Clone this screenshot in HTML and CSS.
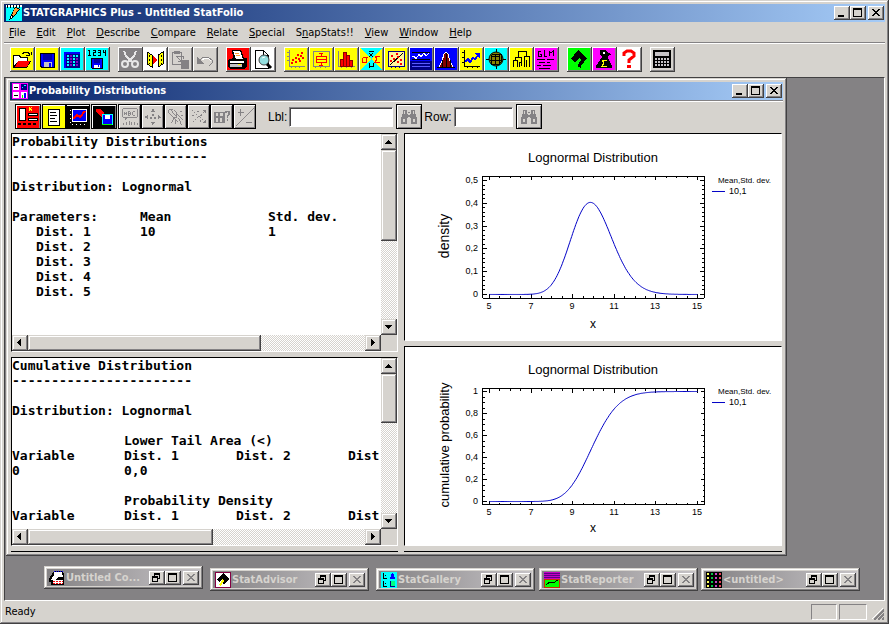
FILE: index.html
```html
<!DOCTYPE html>
<html lang="en">
<head>
    <meta charset="UTF-8">
    <meta name="viewport" content="width=device-width, initial-scale=1.0">
    <title>STATGRAPHICS Plus - Untitled StatFolio</title>
    <link rel="stylesheet" href="styles.css">
</head>
<body>
    <!-- shapes used more than once -->
    <svg class="defs" aria-hidden="true">
        <symbol id="i-min" viewBox="0 0 12 10"><path d="M2 7h6v2H2z"/></symbol>
        <symbol id="i-max" viewBox="0 0 12 10"><path d="M1 0h9v9H1zM2 2v6h7V2z" fill-rule="evenodd"/></symbol>
        <symbol id="i-close" viewBox="0 0 12 10"><path d="M2 1h2v1h1v1h2V2h1V1h2v1H9v1H8v1H7v1h1v1h1v1h1v1H8V7H7V6H5v1H4v1H2V7h1V6h1V5h1V4H4V3H3V2H2z"/></symbol>
        <symbol id="i-restore" viewBox="0 0 12 10"><path d="M3 0h6v6H7V5h1V2H4v1H3zM1 3h6v6H1zM2 5v3h4V5z" fill-rule="evenodd"/></symbol>
        <symbol id="i-up" viewBox="0 0 12 12"><path d="M5 4h1v1h1v1h1v1h1v1H2V7h1V6h1V5h1z"/></symbol>
        <symbol id="i-down" viewBox="0 0 12 12"><path d="M2 4h7v1H8v1H7v1H6v1H5V7H4V6H3V5H2z"/></symbol>
        <symbol id="i-left" viewBox="0 0 12 12"><path d="M7 2v7H6V8H5V7H4V6H3V5h1V4h1V3h1V2z"/></symbol>
        <symbol id="i-right" viewBox="0 0 12 12"><path d="M4 2v7h1V8h1V7h1V6h1V5H7V4H6V3H5V2z"/></symbol>
        <symbol id="i-find" viewBox="0 0 22 22"><path d="M5 4h4v4h1v1h2V8h1V4h4v4h1v3h1v7h-6v-6h-1v-1h-2v1H9v6H3v-7h1V8h1zM6 5v3h1V5zM15 5v3h1V5zM5 13v3h2v-3zM15 13v3h2v-3zM10 6h2v1h-2z" fill="#848284" fill-rule="evenodd"/></symbol>
    </svg>

    <div class="app">
        <header class="titlebar">
            <svg class="icon16" viewBox="0 0 16 16"><path fill="#00ffff" d="M0 2h16v14H0z"/><path fill="#fff" d="M0 0h16v2H0z"/><path d="M1 0h1v3H1zM4 0h1v3H4zM7 0h1v3H7zM10 0h1v3h-1zM13 0h1v3h-1zM3 15l2-5 4-8 5 2-5 7-4 3z"/><path fill="#ff9c31" d="M9 3l4 1-5 7-2-1z"/><path fill="#fff" d="M5 11l2 1-2 1z"/></svg>
            <h1>STATGRAPHICS Plus - Untitled StatFolio</h1>
            <div class="winbtns">
                <button aria-label="Minimize"><svg><use href="#i-min"/></svg></button>
                <button aria-label="Maximize"><svg><use href="#i-max"/></svg></button>
                <button class="close" aria-label="Close"><svg><use href="#i-close"/></svg></button>
            </div>
        </header>

        <nav class="menubar">
            <button><u>F</u>ile</button>
            <button><u>E</u>dit</button>
            <button><u>P</u>lot</button>
            <button><u>D</u>escribe</button>
            <button><u>C</u>ompare</button>
            <button><u>R</u>elate</button>
            <button><u>S</u>pecial</button>
            <button>S<u>n</u>apStats!!</button>
            <button><u>V</u>iew</button>
            <button><u>W</u>indow</button>
            <button><u>H</u>elp</button>
        </nav>

        <div class="toolbar">
            <div class="group">
                <button aria-label="Open"><svg viewBox="0 0 22 22"><path fill="#ffff00" d="M0 0h22v22H0z"/><path d="M2 7h6l2 2h7v4h3l-4 7H2z"/><path fill="#fff" d="M3 8h4l2 2h7v3H7l-4 5z"/><path fill="#ff0000" d="M7 13h12l-3 6H4z"/><path fill="none" stroke="#000" d="M11 5h1V4h5v1h1v3M15 7h4M20 4v3"/></svg></button>
                <button aria-label="Save"><svg viewBox="0 0 22 22"><path fill="#ffff00" d="M0 0h22v22H0z"/><path d="M4 5h15v15H5l-1-1z"/><path fill="#0000ff" d="M5 6h13v13H6l-1-1z"/><path d="M7 6h9v6H7z" fill="#0000a5"/><path fill="#c6c3c6" d="M8 14h8v5H8z"/><path d="M13 15h2v4h-2z" fill="#0000ff"/></svg></button>
                <button aria-label="Open data file"><svg viewBox="0 0 22 22"><path fill="#00ffff" d="M0 0h22v22H0z"/><path fill="#0000ff" d="M3 4h16v16H3z"/><path fill="#000084" d="M5 6h14v14H5z"/><path fill="none" stroke="#00ffff" stroke-width="2" stroke-dasharray="2 1" d="M6 8h12M6 11h12M6 14h12M6 17h12"/><path stroke="#8400c6" stroke-width="2" stroke-dasharray="2 1" d="M10 7v12M16 10v9"/></svg></button>
                <button aria-label="Save data file"><svg viewBox="0 0 22 22"><path fill="#00ffff" d="M0 0h22v22H0z"/><path d="M2 2h2v5h1v1H2V7h1V3H2zM7 2h3v3H8v2h2v1H7V4h2V3H7zM12 2h3v6h-3V7h2V5h-2V4h2V3h-2zM17 2h1v2h1V2h1v6h-1V5h-2z"/><path d="M5 10h12v11H6l-1-1z"/><path fill="#0000ff" d="M6 11h10v9H6z"/><path d="M8 11h6v4H8z" fill="#0000a5"/><path fill="#fff" d="M8 17h6v3H8z"/><path fill="#0000ff" d="M12 17h1v2h-1z"/></svg></button>
            </div>
            <div class="group">
                <button aria-label="Cut"><svg viewBox="0 0 22 22"><path fill="#848284" d="M0 0h22v22H0z"/><path fill="none" stroke="#e7e7e7" stroke-width="2" d="M5 3l2 5 6 6M17 3l-2 5-6 6"/><g class="smooth" fill="none" stroke="#e7e7e7" stroke-width="2"><circle cx="6" cy="16" r="3"/><circle cx="16" cy="16" r="3"/></g></svg></button>
                <button aria-label="Copy"><svg viewBox="0 0 22 22"><path fill="#fff" d="M0 0h22v22H0z"/><path d="M3 4l5 3v12l-5-3zM19 4l-5 3v12l5-3z" fill="#ffff00" stroke="#000"/><path fill="none" stroke="#000" stroke-dasharray="2 2" d="M5 7v9M17 7v9"/><path fill="#ff0000" d="M9 8l4 4-4 4z"/></svg></button>
                <button aria-label="Paste"><svg viewBox="0 0 22 22"><path fill="none" stroke="#848284" d="M3 4h9v12H3zM5 3h5v2H5zM7 8h7v3M8 9l4 4M12 9v4H9"/><path fill="#848284" d="M12 12h8v9h-8z"/></svg></button>
                <button aria-label="Undo"><svg viewBox="0 0 22 22"><path fill="none" stroke="#848284" d="M5 13l4-4h5l4 3v3l-3 3"/><path fill="#848284" d="M3 9v7h7z"/><path fill="none" stroke="#fff" d="M8 12l3-2h3l3 3"/></svg></button>
            </div>
            <div class="group">
                <button aria-label="Print"><svg viewBox="0 0 22 22"><path fill="#ff0000" d="M0 0h22v22H0z"/><path d="M5 2h9l3 8h3v8l-3 3H3l-2-2v-7l5-2z"/><path fill="#fff" d="M6 3h7l3 8H9zM3 13h14v2H3z"/><path stroke="#ff9c31" d="M8 5h4M9 7h4"/><path fill="#c6c3c6" d="M3 16h12v3H3z"/><path fill="#ffff00" d="M11 16h3v1h-3z"/></svg></button>
                <button aria-label="Print preview"><svg viewBox="0 0 22 22"><path fill="#fff" d="M0 0h22v22H0z"/><path fill="#fff" stroke="#000" d="M3 2h8l5 5v13H3zM11 2v5h5"/><g class="smooth"><circle cx="12" cy="12" r="5" fill="#94dfdf" stroke="#424142"/><path stroke="#000" stroke-width="3" d="M15 16l4 4"/><path stroke="#fff" d="M10 10l3-1"/></g></svg></button>
            </div>
            <div class="group">
                <button aria-label="Scatterplot"><svg viewBox="0 0 22 22"><path fill="#ffff00" d="M0 0h22v22H0z"/><path fill="none" stroke="#848284" d="M4 2v16h16M2 4h2M2 8h2M2 12h2M6 18v2M10 18v2M14 18v2"/><path fill="#ff0000" d="M6 14h2v2H6zM7 11h2v2H7zM10 13h2v2h-2zM10 9h2v2h-2zM13 10h2v2h-2zM12 6h2v2h-2zM15 7h2v2h-2zM16 4h2v2h-2zM14 12h2v2h-2zM17 9h2v2h-2z"/></svg></button>
                <button aria-label="Box-and-whisker plot"><svg viewBox="0 0 22 22"><path fill="#ffff00" d="M0 0h22v22H0z"/><path fill="none" stroke="#848284" d="M3 3h16v15H3zM5 18v2M10 18v2M15 18v2"/><path fill="none" stroke="#ff0000" d="M6 8h10v6H6zM6 11h10M11 5v3M11 14v3M9 5h4M9 17h4"/></svg></button>
                <button aria-label="Histogram"><svg viewBox="0 0 22 22"><path fill="#ffff00" d="M0 0h22v22H0z"/><path fill="none" stroke="#848284" d="M3 3v15h17M6 18v2M11 18v2M16 18v2"/><path fill="#ff0000" stroke="#840000" d="M5 11h3v7H5zM8 4h3v14H8zM11 7h3v11h-3zM14 12h3v6h-3z"/></svg></button>
                <button aria-label="Summary statistics"><svg viewBox="0 0 22 22"><path fill="#00ffff" d="M0 0h22v22H0z"/><path fill="#ffff00" d="M0 0l22 22V0L0 22z"/><path fill="none" stroke="#000" d="M9 3h5M9 5l4 4M13 5L9 9M9 15v5M9 18h4M13 15v4"/><path fill="none" stroke="#ff0000" d="M8 9H4L2 11v3h4v-4M20 8h-5l2 3-2 3h5"/></svg></button>
                <button aria-label="Simple regression"><svg viewBox="0 0 22 22"><path fill="#ffff00" d="M0 0h22v22H0z"/><path fill="#fff79c" stroke="#000084" d="M3 3h16v15H3z"/><path stroke="#000" d="M5 17L18 5"/><path fill="#ff0000" d="M6 7h2v2H6zM8 10h2v2H8zM11 5h2v2h-2zM12 8h2v2h-2zM5 12h2v2H5zM12 13h2v2h-2zM15 11h2v2h-2zM15 15h2v2h-2z"/><path stroke="#000084" d="M6 18v2M10 18v2M14 18v2"/></svg></button>
                <button aria-label="Control charts"><svg viewBox="0 0 22 22"><path fill="#0000ff" d="M0 0h22v22H0z"/><path fill="#000084" d="M0 13h22v9H0z"/><path stroke="#000" d="M2 4h18M2 11h18"/><path stroke="#5a5aff" d="M2 15h18M2 18h18"/><path fill="none" stroke="#fff" d="M2 9l2-1 2 3 3-5 2 3 3-4 2 3 3-3"/></svg></button>
                <button aria-label="Capability analysis"><svg viewBox="0 0 22 22"><path fill="#0000ff" d="M0 0h22v22H0z"/><path fill="#840000" stroke="#fff" d="M4 19l3-6 2-7 2-2 2 2 2 7 3 6z"/><path fill="none" stroke="#000" d="M2 19h18M11 5v14M7 12v7M15 12v7"/></svg></button>
                <button aria-label="Time series"><svg viewBox="0 0 22 22"><path fill="#ffff00" d="M0 0h22v22H0z"/><path fill="none" stroke="#000" d="M4 2v16h16M2 4h2M2 9h2M2 14h2M7 18v2M12 18v2M17 18v2"/><path fill="none" stroke="#0000ff" stroke-width="2" d="M5 14l3-3 2 3 3-4 2 1 4-5"/><path fill="#0000ff" d="M14 5h6v6z"/></svg></button>
                <button aria-label="Experimental design"><svg viewBox="0 0 22 22"><path fill="#00ffff" d="M0 0h22v22H0z"/><path d="M11 1v20M1 11h20" stroke="#000"/><g class="smooth"><circle cx="11" cy="11" r="7" fill="#848200" stroke="#000"/></g><path fill="none" stroke="#000" d="M6 8h8v8H6zM8 6h8v8M6 8l2-2M14 8l2-2M14 16l2-2M10 6v11M5 12h12"/></svg></button>
                <button aria-label="Cluster analysis"><svg viewBox="0 0 22 22"><path fill="#ffff00" d="M0 0h22v22H0z"/><path fill="none" stroke="#000" d="M8 9V3h8v5M5 12V9h6v9M3 19v-7h4v7M14 19V8h5v11M16 12v7M9 19v-5h2"/></svg></button>
                <button aria-label="General linear models"><svg viewBox="0 0 22 22"><path fill="#ff00ff" d="M0 0h22v22H0z"/><path fill="none" stroke="#000" d="M6 3H3v5h3V6H5M9 2v6h3M14 8V3l2 2 2-2v5M2 11h8M12 11h7M4 14h6M12 14h3M2 17h4M8 17h8M4 20h11"/></svg></button>
            </div>
            <div class="group">
                <button aria-label="StatAdvisor"><svg viewBox="0 0 22 22"><path fill="#00ff00" d="M0 0h22v22H0z"/><path d="M10 2l9 8-6 8v2l-4-2 4-6-2-2-4 5-4-4z"/><path fill="#00ff00" d="M8 15l2-1v4l-2-1z"/></svg></button>
                <button aria-label="StatWizard"><svg viewBox="0 0 22 22"><path fill="#ff00ff" d="M0 0h22v22H0z"/><path d="M7 2h5l3 3 4 1-4 2v2l4 8v2H3v-2l4-6 2-3-2-3z"/><path fill="#fff" d="M10 4h2v2h-2z"/><path fill="none" stroke="#ffff00" d="M14 12H9l2 3-2 3h5"/></svg></button>
                <button aria-label="Help"><svg viewBox="0 0 22 22"><path fill="#fff" d="M0 0h22v22H0z"/><path class="smooth" fill="none" stroke="#ff0000" stroke-width="3" d="M6 8V5l3-2h4l3 2v3l-5 4v3"/><path fill="#ff0000" d="M9 17h4v3H9z"/></svg></button>
            </div>
            <div class="group">
                <button aria-label="Calculator"><svg viewBox="0 0 22 22"><path d="M2 2h18v18H2z"/><path fill="#c6c3c6" d="M4 4h14v4H4z"/><path stroke="#c6c3c6" stroke-width="2" stroke-dasharray="2 1" d="M4 11h14M4 14h14M4 17h14"/></svg></button>
            </div>
        </div>

        <main class="workspace">
            <section class="child">
                <header class="titlebar">
                    <svg class="icon16" viewBox="0 0 16 16"><path fill="#ff00ff" d="M0 0h16v16H0z"/><path fill="#fff" d="M1 1h6v6H1zM1 9h6v6H1z"/><path fill="#000084" d="M9 1h6v6H9z"/><path fill="#fff" d="M9 9h6v6H9z"/><path d="M2 4h4v1H2zM2 12h4v1H2z"/><path fill="#00ff00" d="M10 12h1v3h-1z"/><path fill="#0000ff" d="M12 10h2v5h-2z"/><path fill="#00ffff" d="M10 4h1v1h-1zM12 2h2v1h-2z"/></svg>
                    <h2>Probability Distributions</h2>
                    <div class="winbtns">
                        <button aria-label="Minimize"><svg><use href="#i-min"/></svg></button>
                        <button aria-label="Maximize"><svg><use href="#i-max"/></svg></button>
                        <button class="close" aria-label="Close"><svg><use href="#i-close"/></svg></button>
                    </div>
                </header>

                <div class="childbar">
                    <div class="group">
                        <button aria-label="Input dialog"><svg viewBox="0 0 22 22"><path fill="#ff0000" d="M0 0h22v22H0z"/><path fill="#fff" stroke="#000" d="M2 2h6v12H2zM11 7h9v2h-9zM11 12h9v2h-9z"/><path fill="none" stroke="#ffff00" d="M12 1l3 4M15 1l-3 4"/><path fill="none" stroke="#000" stroke-width="2" stroke-dasharray="3 2" d="M1 18h20"/></svg></button>
                    </div>
                    <div class="group">
                        <button aria-label="Tabular options"><svg viewBox="0 0 22 22"><path fill="#ffff00" d="M0 0h22v22H0z"/><path fill="#fff" stroke="#000" d="M5 3h11v16H5z"/><path stroke="#000" d="M7 6h6M7 9h7M7 12h5M7 15h7"/></svg></button>
                        <button aria-label="Graphical options"><svg viewBox="0 0 22 22"><path d="M0 0h22v22H0z"/><path fill="#0000ff" stroke="#fff" d="M5 3h14v12H5z"/><path fill="none" stroke="#ff0000" stroke-width="2" d="M6 13l4-4 3 2 5-6"/><path stroke="#fff" stroke-dasharray="1 3" d="M3 4v14M5 18h15"/></svg></button>
                    </div>
                    <div class="group">
                        <button aria-label="Save results"><svg viewBox="0 0 22 22"><path d="M0 0h22v22H0z"/><path fill="#ff0000" d="M3 3h4l4 4v4H8L3 6z"/><path fill="#0000ff" stroke="#00ffff" d="M9 8h10v10H9z"/><path fill="#fff" d="M12 9h5v4h-5z"/><path fill="none" stroke="#00ff00" d="M9 18h10"/></svg></button>
                    </div>
                    <div class="group tight">
                        <button aria-label="Graph labels"><svg viewBox="0 0 22 22"><g fill="none" stroke="#848284"><path d="M3 2h16v9H8l-2 3v-3H3zM5 9V6l1-1 1 1v3M5 7h2M9 5v4h2V5zM9 7h3M17 5h-3v4h3M4 20v-2M7 20v-3M10 20v-5M13 20v-3M16 20v-4M19 20v-2"/></g></svg></button>
                        <button aria-label="Jitter"><svg viewBox="0 0 22 22"><g fill="#848284"><path d="M11 2l3 4H8zM11 20l3-4H8zM2 11l4-3v6zM20 11l-4-3v6zM10 8h2v2h-2zM8 11h2v2H8zM12 11h2v2h-2zM5 5h1v1H5zM16 5h1v1h-1zM5 16h1v1H5zM16 16h1v1h-1z"/></g></svg></button>
                        <button aria-label="Brush"><svg viewBox="0 0 22 22"><path fill="none" stroke="#848284" d="M3 3h5l4 4v4H8L3 6zM5 3l6 7M8 11l5 5M12 8l6 6M9 12l-3 6M11 14l-1 5M14 12l3 8M15 4l3 2M19 9l-3 1"/></svg></button>
                        <button aria-label="Rotate"><svg viewBox="0 0 22 22"><path fill="none" stroke="#848284" stroke-dasharray="2 1" d="M3 3l16 15M19 3L3 18"/><path fill="#848284" d="M14 3h5v4zM15 18h4v-4zM3 9h2v1H3zM9 4h2v1H9zM12 9h2v1h-2zM7 16h2v1H7zM12 14h1v2h-1z"/></svg></button>
                        <button aria-label="Identify"><svg viewBox="0 0 22 22"><path fill="#848284" d="M2 5h12v13H2zM4 7v3h3V7zM9 7v3h3V7zM4 12v4h3v-4zM9 12v4h2v-4z" fill-rule="evenodd"/><path fill="none" stroke="#848284" stroke-width="2" d="M15 7V5h4v3l-2 2v2M17 13v2"/></svg></button>
                        <button aria-label="Include or exclude"><svg viewBox="0 0 22 22"><path fill="none" stroke="#848284" d="M1 21L21 1"/><path fill="none" stroke="#848284" stroke-width="2" d="M3 6h7M6 2v8M12 17h7"/></svg></button>
                    </div>
                    <label for="lbl">Lbl:</label>
                    <input id="lbl" class="field" type="text">
                    <button class="find" aria-label="Find label"><svg><use href="#i-find"/></svg></button>
                    <label class="row-label" for="row">Row:</label>
                    <input id="row" class="field short" type="text">
                    <button class="find" aria-label="Find row"><svg><use href="#i-find"/></svg></button>
                </div>

                <div class="panes">
                    <div class="col">
                        <div class="pane text-pane upper">
                            <div class="report">
                                <h3>Probability Distributions</h3>
                                <p>-------------------------</p>
                                <p class="gap">Distribution: Lognormal</p>
                                <table class="params gap">
                                    <tr><th>Parameters:</th><th>Mean</th><th>Std. dev.</th></tr>
                                    <tr><td class="indent">Dist. 1</td><td>10</td><td>1</td></tr>
                                    <tr><td class="indent">Dist. 2</td><td></td><td></td></tr>
                                    <tr><td class="indent">Dist. 3</td><td></td><td></td></tr>
                                    <tr><td class="indent">Dist. 4</td><td></td><td></td></tr>
                                    <tr><td class="indent">Dist. 5</td><td></td><td></td></tr>
                                </table>
                            </div>
                            <div class="vscroll">
                                <button aria-label="Scroll up"><svg><use href="#i-up"/></svg></button>
                                <div class="track"><div class="thumb"></div></div>
                                <button aria-label="Scroll down"><svg><use href="#i-down"/></svg></button>
                            </div>
                            <div class="hscroll">
                                <button aria-label="Scroll left"><svg><use href="#i-left"/></svg></button>
                                <div class="track"><div class="thumb"></div></div>
                                <button aria-label="Scroll right"><svg><use href="#i-right"/></svg></button>
                            </div>
                        </div>
                        <div class="pane text-pane lower">
                            <div class="report">
                                <h3>Cumulative Distribution</h3>
                                <p>-----------------------</p>
                                <p class="gap">Distribution: Lognormal</p>
                                <table class="tails gap">
                                    <tr><th></th><th colspan="3">Lower Tail Area (&lt;)</th></tr>
                                    <tr><th>Variable</th><th>Dist. 1</th><th>Dist. 2</th><th>Dist</th></tr>
                                    <tr><td>0</td><td>0,0</td><td></td><td></td></tr>
                                </table>
                                <table class="tails gap">
                                    <tr><th></th><th colspan="3">Probability Density</th></tr>
                                    <tr><th>Variable</th><th>Dist. 1</th><th>Dist. 2</th><th>Dist</th></tr>
                                </table>
                            </div>
                            <div class="vscroll">
                                <button aria-label="Scroll up"><svg><use href="#i-up"/></svg></button>
                                <div class="track"><div class="thumb"></div></div>
                                <button aria-label="Scroll down"><svg><use href="#i-down"/></svg></button>
                            </div>
                            <div class="hscroll">
                                <button aria-label="Scroll left"><svg><use href="#i-left"/></svg></button>
                                <div class="track"><div class="thumb"></div></div>
                                <button aria-label="Scroll right"><svg><use href="#i-right"/></svg></button>
                            </div>
                        </div>
                    </div>
                    <div class="col">
                        <div class="pane chart-pane pdf">
                            <svg class="chart" id="pdf" viewBox="0 0 376 206" role="img" aria-label="Lognormal density"></svg>
                        </div>
                        <div class="pane chart-pane cdf">
                            <svg class="chart" id="cdf" viewBox="0 0 376 198" role="img" aria-label="Lognormal cumulative probability"></svg>
                        </div>
                    </div>
                </div>
            </section>

            <section class="minwin comments">
                <header class="titlebar">
                    <svg class="icon16" viewBox="0 0 16 16"><path fill="#000" d="M5 1h9l1 4v10H2v-3H0V9l3-5z"/><path fill="#fff" d="M5 2h8l1 5H9l-2 3H2l3-5z"/><path fill="#fff" d="M4 10h10v4H4z"/><path stroke="#ff0000" stroke-dasharray="2 1" d="M4 11h10M4 13h10"/><path stroke="#0000ff" stroke-dasharray="1 1" d="M5 1h9"/></svg>
                    <h2>Untitled Co...</h2>
                    <div class="winbtns">
                        <button aria-label="Restore"><svg><use href="#i-restore"/></svg></button>
                        <button aria-label="Maximize"><svg><use href="#i-max"/></svg></button>
                        <button class="close" aria-label="Close" disabled><svg><use href="#i-close"/></svg></button>
                    </div>
                </header>
            </section>
            <section class="minwin advisor">
                <header class="titlebar">
                    <svg class="icon16" viewBox="0 0 16 16"><path fill="#fff" stroke="#840042" d="M0 0h15v15H0z"/><path d="M8 1l6 6-5 6-1-1 1-3-2-2-3 3-2-2z"/><path fill="#ffff00" d="M7 7l2 2-3 5-3-1 3-2z"/></svg>
                    <h2>StatAdvisor</h2>
                    <div class="winbtns">
                        <button aria-label="Restore"><svg><use href="#i-restore"/></svg></button>
                        <button aria-label="Maximize"><svg><use href="#i-max"/></svg></button>
                        <button class="close" aria-label="Close" disabled><svg><use href="#i-close"/></svg></button>
                    </div>
                </header>
            </section>
            <section class="minwin gallery">
                <header class="titlebar">
                    <svg class="icon16" viewBox="0 0 16 16"><path fill="#00ffff" d="M0 0h16v16H0z"/><path fill="none" stroke="#000" d="M2 1v5h4M4 3h1M2 9v5h4M4 11h1"/><path fill="#0000ff" d="M9 6l2-5 2 2 1 4H9z"/><path fill="#00ff84" d="M9 9h5v5H9z"/><path fill="none" stroke="#000084" d="M9 9v5h5"/></svg>
                    <h2>StatGallery</h2>
                    <div class="winbtns">
                        <button aria-label="Restore"><svg><use href="#i-restore"/></svg></button>
                        <button aria-label="Maximize"><svg><use href="#i-max"/></svg></button>
                        <button class="close" aria-label="Close" disabled><svg><use href="#i-close"/></svg></button>
                    </div>
                </header>
            </section>
            <section class="minwin reporter">
                <header class="titlebar">
                    <svg class="icon16" viewBox="0 0 16 16"><path fill="#c600c6" d="M0 0h16v7H0z"/><path stroke="#5a0084" d="M0 1h16M0 3h16M0 5h16"/><path fill="#00ff00" stroke="#c63100" d="M0 7h15v8H0z"/><path fill="none" stroke="#000" d="M2 13l4-3 3 1 5-3"/></svg>
                    <h2>StatReporter</h2>
                    <div class="winbtns">
                        <button aria-label="Restore"><svg><use href="#i-restore"/></svg></button>
                        <button aria-label="Maximize"><svg><use href="#i-max"/></svg></button>
                        <button class="close" aria-label="Close" disabled><svg><use href="#i-close"/></svg></button>
                    </div>
                </header>
            </section>
            <section class="minwin datasheet">
                <header class="titlebar">
                    <svg class="icon16" viewBox="0 0 16 16"><path d="M0 0h16v16H0z"/><g stroke-width="2" stroke-dasharray="2 2"><path stroke="#ffff5a" d="M2 1v14"/><path stroke="#00c642" d="M6 1v14"/><path stroke="#c642c6" d="M10 1v14"/><path stroke="#e7425a" d="M14 1v14"/></g></svg>
                    <h2>&lt;untitled&gt;</h2>
                    <div class="winbtns">
                        <button aria-label="Restore"><svg><use href="#i-restore"/></svg></button>
                        <button aria-label="Maximize"><svg><use href="#i-max"/></svg></button>
                        <button class="close" aria-label="Close" disabled><svg><use href="#i-close"/></svg></button>
                    </div>
                </header>
            </section>
        </main>

        <footer class="statusbar">
            <span class="message">Ready</span>
            <span class="cell"></span>
            <span class="cell wide"></span>
            <svg class="grip" viewBox="0 0 12 12"><path stroke="#fff" d="M0 11L11 0M4 11l7-7M8 11l3-3"/><path stroke="#848284" stroke-width="2" d="M2 12L12 2M6 12l6-6M10 12l2-2"/></svg>
        </footer>
    </div>

    <script src="charts.js"></script>
</body>
</html>
```
FILE: styles.css
```css
* {
    box-sizing: border-box;
}
body {
    margin: 0;
    background: #d6d3ce;
    color: #000;
    font-family: "DejaVu Sans Condensed", "DejaVu Sans", sans-serif;
    font-size: 11px;
}
h1, h2, h3, p {
    margin: 0;
    font-size: inherit;
}
button {
    padding: 0;
    border: 0;
    background: #d6d3ce;
    color: inherit;
    font: inherit;
}
svg {
    display: block;
    shape-rendering: crispEdges;
}
.smooth {
    shape-rendering: auto;
}
.defs {
    position: absolute;
    width: 0;
    height: 0;
}
.app {
    display: flex;
    flex-direction: column;
    height: 100vh;
    min-height: 480px;
    padding: 4px 4px 2px;
    box-shadow: inset -1px -1px #424142, inset 1px 1px #d6d3ce, inset -2px -2px #848284, inset 2px 2px #fff;
}

/* title bars */
.titlebar {
    display: flex;
    align-items: center;
    flex: none;
    height: 18px;
    padding: 0 1px 0 2px;
    background: linear-gradient(90deg, #08246b, #a5cbf7);
    color: #fff;
}
.titlebar h1, .titlebar h2 {
    flex: 1;
    min-width: 0;
    margin-left: 1px;
    overflow: hidden;
    font-weight: bold;
    line-height: 16px;
    white-space: nowrap;
}
.icon16 {
    flex: none;
    width: 16px;
    height: 16px;
}
.winbtns {
    display: flex;
    flex: none;
}
.winbtns button {
    width: 16px;
    height: 14px;
    padding: 1px 2px 3px;
    color: #000;
    box-shadow: inset -1px -1px #424142, inset 1px 1px #fff, inset -2px -2px #848284;
}
.winbtns .close {
    margin-left: 2px;
}
.winbtns svg {
    width: 12px;
    height: 10px;
    margin-top: 1px;
}
.winbtns button:disabled svg {
    fill: #848284;
}

.menubar {
    display: flex;
    flex: none;
    height: 21px;
    border-bottom: 1px solid #848284;
    box-shadow: 0 1px #fff;
}
.menubar button {
    padding: 0 6px 0 5px;
}

.toolbar {
    display: flex;
    flex: none;
    gap: 8px;
    padding: 4px 6px 5px;
}
.group {
    display: flex;
}
.toolbar button {
    width: 25px;
    height: 25px;
    padding: 1px 2px 2px 1px;
    box-shadow: inset -1px -1px #424142, inset 1px 1px #fff, inset -2px -2px #848284;
}
.toolbar svg {
    width: 22px;
    height: 22px;
}

/* MDI desktop */
.workspace {
    position: relative;
    display: flex;
    flex: 1;
    min-height: 0;
    padding: 0 97px 44px 1px;
    background: #848284;
    border: 1px solid #424142;
    border-right-color: #fff;
    border-bottom-color: #fff;
}
.child {
    display: flex;
    flex: 1;
    flex-direction: column;
    min-width: 0;
    padding: 4px;
    background: #d6d3ce;
    box-shadow: inset -1px -1px #424142, inset 1px 1px #d6d3ce, inset -2px -2px #848284, inset 2px 2px #fff;
}
.childbar {
    display: flex;
    flex: none;
    align-items: center;
    height: 33px;
    padding: 0 5px 1px;
    border-top: 1px solid #848284;
    box-shadow: inset 0 1px #fff;
}
.childbar .group {
    margin-right: 1px;
}
.childbar button {
    width: 24px;
    height: 25px;
    border: 1px solid #000;
    box-shadow: inset 1px 1px #fff, inset -1px -1px #848284;
}
.childbar button svg {
    width: 100%;
    height: 22px;
}
.childbar .group:first-child button,
.childbar .group:nth-child(3) button,
.childbar .find {
    width: 26px;
}
.childbar .tight button {
    width: 23px;
    padding: 1px 0 0 1px;
}
.childbar label {
    margin: 0 2px 0 11px;
    font-size: 12px;
    font-family: "Liberation Sans", sans-serif;
}
.childbar .row-label {
    margin-left: 2px;
}
.field {
    width: 104px;
    height: 20px;
    margin-right: 3px;
    border: 1px solid #848284;
    border-right-color: #fff;
    border-bottom-color: #fff;
    box-shadow: inset 1px 1px #424142;
    background: #fff;
    font: inherit;
}
.field.short {
    width: 59px;
}

.panes {
    display: grid;
    flex: 1;
    grid-template-columns: minmax(0, 387fr) minmax(0, 378fr);
    gap: 6px;
    min-height: 0;
    padding: 0 1px 0 1px;
}
.col {
    display: flex;
    flex-direction: column;
    gap: 5px;
    min-height: 0;
    border-bottom: 1px solid #000;
    padding-bottom: 5px;
}
.pane {
    min-height: 0;
    overflow: hidden;
    background: #fff;
    border: 1px solid #000;
    border-right-color: #fff;
    border-bottom-color: #fff;
}
.upper {
    flex: 219 1 0;
}
.lower {
    flex: 189 1 0;
}
.pdf {
    flex: 208 1 0;
}
.cdf {
    flex: 200 1 0;
}

/* text reports */
.text-pane {
    display: grid;
    grid-template-columns: minmax(0, 1fr) 16px;
    grid-template-rows: minmax(0, 1fr) 16px;
    background: #d6d3ce;
}
.report {
    overflow: hidden;
    background: #fff;
    font: bold 13px/15px "DejaVu Sans Mono", monospace;
    white-space: nowrap;
}
.report .gap {
    margin-top: 15px;
}
.report table {
    border-collapse: collapse;
    table-layout: fixed;
    width: 448px;
}
.report .params {
    width: 384px;
}
.report th, .report td {
    padding: 0;
    text-align: left;
    height: 15px;
}
.report .indent {
    padding-left: 24px;
}

.vscroll, .hscroll {
    display: flex;
}
.vscroll {
    flex-direction: column;
}
.vscroll button, .hscroll button, .thumb {
    background: #d6d3ce;
    box-shadow: inset -1px -1px #424142, inset 1px 1px #d6d3ce, inset -2px -2px #848284, inset 2px 2px #fff;
}
.vscroll button, .hscroll button {
    flex: none;
    width: 16px;
    height: 16px;
    padding: 2px;
}
.vscroll svg, .hscroll svg {
    width: 12px;
    height: 12px;
}
.track {
    flex: 1;
    background: repeating-conic-gradient(#fff 0 25%, #d6d3ce 0 50%) 0 0 / 2px 2px;
}
.thumb {
    height: 100%;
}
.upper .vscroll .thumb {
    height: 54%;
}
.lower .vscroll .thumb {
    height: 35%;
}
.upper .hscroll .thumb {
    width: 69%;
}
.lower .hscroll .thumb {
    width: 55%;
}

/* graphs */
.chart {
    width: 100%;
    height: 100%;
    font-family: "Liberation Sans", Arial, sans-serif;
}
.chart .title {
    font-size: 13px;
    text-anchor: middle;
}
.chart .xlabel {
    font-size: 12px;
    text-anchor: middle;
}
.chart .ylabel {
    font-size: 14px;
    text-anchor: middle;
}
#cdf .ylabel {
    font-size: 13px;
}
.chart .tick, .chart .legend {
    font-size: 9px;
}
.chart .legend-head {
    font-size: 8px;
}
.chart .xt {
    text-anchor: middle;
}
.chart .yt {
    text-anchor: end;
}
.chart .axis {
    fill: none;
    stroke: #000;
}
.chart .curve {
    fill: none;
    stroke: #0000c6;
    shape-rendering: auto;
}

/* minimized windows */
.minwin {
    position: absolute;
    bottom: 9px;
    width: 159px;
    height: 23px;
    padding: 3px;
    background: #d6d3ce;
    box-shadow: inset -1px -1px #424142, inset 1px 1px #d6d3ce, inset -2px -2px #848284, inset 2px 2px #fff;
}
.minwin .titlebar {
    height: 17px;
    background: linear-gradient(90deg, #848284, #c6c3c6);
    color: #d6d3ce;
}
.comments {
    bottom: 11px;
    left: 39px;
}
.advisor {
    left: 205px;
}
.gallery {
    left: 371px;
}
.reporter {
    left: 534px;
}
.datasheet {
    left: 696px;
}

.statusbar {
    display: flex;
    flex: none;
    align-items: center;
    gap: 2px;
    height: 21px;
}
.message {
    flex: 1;
    padding-left: 1px;
}
.cell {
    width: 26px;
    height: 16px;
    border: 1px solid #848284;
    border-right-color: #fff;
    border-bottom-color: #fff;
}
.cell.wide {
    width: 28px;
}
.grip {
    width: 12px;
    height: 12px;
    margin: 5px 1px 0 3px;
}
```
FILE: charts.js
```js
const NS = 'http://www.w3.org/2000/svg';

// lognormal with mean 10 and standard deviation 1
const sigma = Math.sqrt(Math.log(1.01));
const mu = Math.log(10) - sigma * sigma / 2;

function density(x) {
    const z = (Math.log(x) - mu) / sigma;
    return Math.exp(-z * z / 2) / (x * sigma * Math.sqrt(2 * Math.PI));
}

function add(svg, name, attrs, text) {
    const el = document.createElementNS(NS, name);
    for (const key in attrs) el.setAttribute(key, attrs[key]);
    if (text) el.textContent = text;
    svg.appendChild(el);
}

function drawChart(id, c) {
    const svg = document.getElementById(id);
    const left = 77, right = 299;
    const px = x => 84 + (x - 5) * 208 / 10;
    const py = y => c.y0 - y / c.max * (c.y0 - c.y1);
    let axis = `M${left} ${c.top}H${right}V${c.bottom}H${left}Z`;

    for (let i = 0; i <= 20; i++) {
        const x = Math.round(px(5 + i / 2));
        const len = i % 4 ? 2 : 4;
        axis += `M${x} ${c.top}v${len}M${x} ${c.bottom}v-${len}`;
        if (i % 4 === 0) {
            add(svg, 'text', { class: 'tick xt', x: x, y: c.bottom + 11 }, String(5 + i / 2));
        }
    }
    const steps = 5 * c.minor;
    for (let i = 0; i <= steps; i++) {
        const value = c.max * i / steps;
        const y = Math.round(py(value));
        const len = i % c.minor ? 2 : 4;
        axis += `M${left} ${y}h${len}M${right} ${y}h-${len}`;
        if (i % c.minor === 0) {
            const label = String(Number(value.toFixed(1))).replace('.', ',');
            add(svg, 'text', { class: 'tick yt', x: left - 4, y: y + 3 }, label);
        }
    }
    add(svg, 'path', { class: 'axis', transform: 'translate(.5 .5)', d: axis });

    // the cumulative curve is the running sum of the density
    let d = '';
    let sum = 0;
    for (let x = 5; x <= 15.001; x += 0.05) {
        sum += density(x - 0.025) * 0.05;
        const y = c.cumulative ? sum : density(x);
        d += (d ? 'L' : 'M') + px(x).toFixed(1) + ' ' + py(y).toFixed(1);
    }
    add(svg, 'path', { class: 'curve', transform: 'translate(.5 .5)', d: d });

    add(svg, 'text', { class: 'title', x: 188, y: c.title }, 'Lognormal Distribution');
    add(svg, 'text', { class: 'xlabel', x: 188, y: c.xlabel }, 'x');
    add(svg, 'text', { class: 'ylabel', transform: `translate(44 ${c.middle}) rotate(-90)` }, c.ylabel);
    add(svg, 'text', { class: 'legend-head', x: 313, y: c.legend }, 'Mean,Std. dev.');
    add(svg, 'text', { class: 'legend', x: 324, y: c.legend + 11 }, '10,1');
    add(svg, 'path', { class: 'curve', transform: 'translate(0 .5)', d: `M307 ${c.legend + 8}h13` });
}

drawChart('pdf', {
    top: 42, bottom: 164, y0: 160, y1: 46, max: 0.5, minor: 5,
    title: 28, xlabel: 194, middle: 102, legend: 49, ylabel: 'density'
});
drawChart('cdf', {
    top: 41, bottom: 157, y0: 154, y1: 44, max: 1, minor: 4, cumulative: true,
    title: 27, xlabel: 185, middle: 98, legend: 47, ylabel: 'cumulative probability'
});
```
